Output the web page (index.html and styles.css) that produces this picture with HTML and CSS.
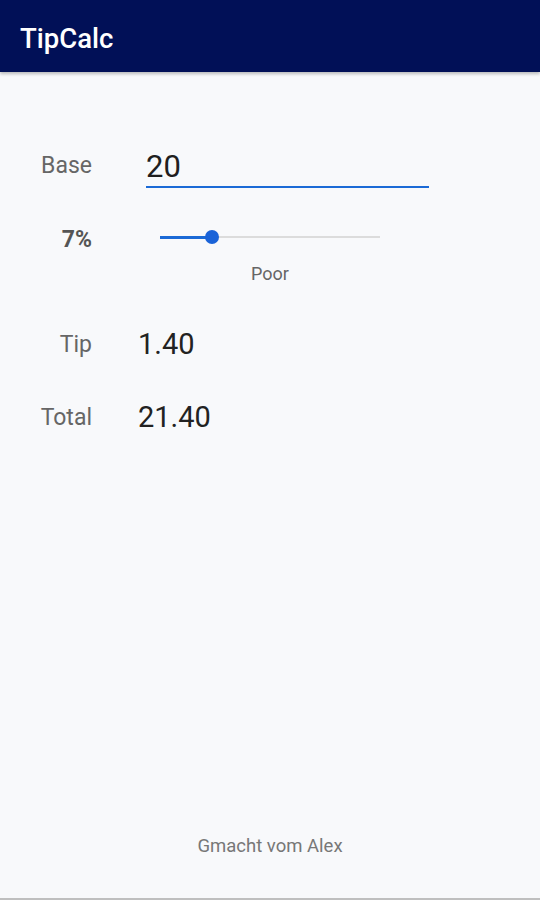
FILE: index.html
```html
<!DOCTYPE html>
<html lang="de">
<head>
    <meta charset="UTF-8">
    <meta name="viewport" content="width=device-width, initial-scale=1.0">
    <title>TipCalc</title>
    <link rel="stylesheet" href="styles.css">
</head>
<body>

    <div class="app">
        <div class="toolbar">
            <h1>TipCalc</h1>
        </div>

        <div class="content">
            <div class="row row-base">
                <label for="base" class="label">Base</label>
                <input type="number" id="base" class="base-input" value="20">
            </div>

            <div class="row row-percent">
                <span class="label percent">7%</span>
                <div class="slider-box">
                    <div class="slider">
                        <div class="track"></div>
                        <div class="track-fill" style="width: 23.6%"></div>
                        <div class="thumb" style="left: 23.6%"></div>
                    </div>
                    <div class="tip-desc">Poor</div>
                </div>
            </div>

            <div class="row row-result">
                <span class="label">Tip</span>
                <span class="value">1.40</span>
            </div>

            <div class="row row-result row-total">
                <span class="label">Total</span>
                <span class="value">21.40</span>
            </div>
        </div>

        <div class="footer">Gmacht vom Alex</div>
    </div>

</body>
</html>
```

FILE: styles.css
```css
body {
    margin: 0;
    font-family: Roboto, "Liberation Sans", Arial, sans-serif;
    background-color: #f8f9fb;
}
.app {
    display: flex;
    flex-direction: column;
    min-height: 100vh;
    box-sizing: border-box;
    border-bottom: 2px solid #bfbfbf;
}
.toolbar {
    height: 72px;
    background-color: #011057;
    display: flex;
    align-items: center;
    padding: 4px 20px 0;
    box-sizing: border-box;
    box-shadow: 0 2px 3px rgba(0, 0, 0, 0.25);
}
.toolbar h1 {
    margin: 0;
    color: #ffffff;
    font-size: 27.5px;
    font-weight: 500;
}
.content {
    padding-top: 76px;
}
.row {
    display: flex;
}
.label {
    width: 92px;
    text-align: right;
    font-size: 23px;
    color: #666666;
    flex-shrink: 0;
}
.row-base {
    align-items: flex-start;
}
.row-base .label {
    line-height: 36px;
}
.base-input {
    margin-left: 54px;
    width: 283px;
    height: 40px;
    box-sizing: border-box;
    padding: 0 0 2px;
    border: none;
    border-bottom: 2px solid #1b6ad6;
    background: transparent;
    font-family: inherit;
    font-size: 31px;
    line-height: 36px;
    color: #1f1f1f;
    outline: none;
}
.row-percent {
    margin-top: 37px;
    align-items: flex-start;
}
.percent {
    font-weight: 700;
    color: #555555;
    line-height: 24px;
    padding-top: 3px;
}
.slider-box {
    margin-left: 68px;
    width: 220px;
    display: flex;
    flex-direction: column;
    align-items: center;
}
.slider {
    position: relative;
    width: 100%;
    height: 24px;
}
.track {
    position: absolute;
    left: 0;
    right: 0;
    top: 11px;
    height: 2px;
    background-color: #dcdcdc;
}
.track-fill {
    position: absolute;
    left: 0;
    top: 10.5px;
    height: 3px;
    background-color: #1b6ad6;
}
.thumb {
    position: absolute;
    top: 5px;
    width: 14px;
    height: 14px;
    margin-left: -7px;
    border-radius: 50%;
    background-color: #1a63d8;
}
.tip-desc {
    margin-top: 14px;
    font-size: 18px;
    line-height: 21px;
    color: #666666;
}
.row-result {
    margin-top: 42px;
    align-items: center;
    height: 36px;
}
.row-total {
    margin-top: 37px;
}
.value {
    margin-left: 46px;
    font-size: 29px;
    color: #222222;
}
.footer {
    margin-top: auto;
    padding-bottom: 41px;
    text-align: center;
    font-size: 18.5px;
    line-height: 21px;
    color: #777777;
}
```
